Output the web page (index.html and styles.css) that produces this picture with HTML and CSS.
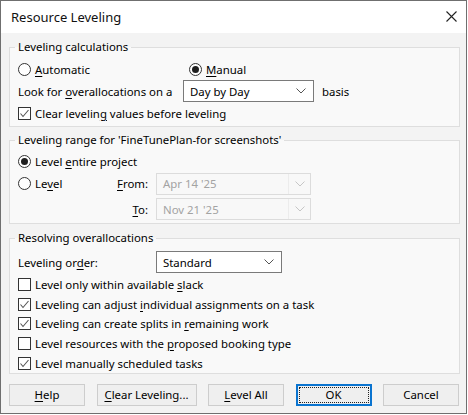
FILE: index.html
```html
<!DOCTYPE html>
<html>
<head>
<meta charset="utf-8">
<title>Resource Leveling</title>
<link rel="stylesheet" href="styles.css">
</head>
<body>
<div class="window">
  <div class="titlebar">
    <span class="title">Resource Leveling</span>
    <svg class="close" width="11" height="11" viewBox="0 0 11 11"><path d="M0.5 0.5L10.5 10.5M10.5 0.5L0.5 10.5" stroke="#222" stroke-width="1.1" fill="none"/></svg>
  </div>
  <div class="content">
    <fieldset class="group g1">
      <legend>Leveling calculations</legend>
      <div class="row">
        <label class="opt auto"><span class="radio"></span><span><u>A</u>utomatic</span></label>
        <label class="opt"><span class="radio on"></span><span><u>M</u>anual</span></label>
      </div>
      <div class="row">
        <span class="look-label">Look for <u>o</u>verallocations on a</span>
        <div class="combo basis-combo"><span>Day by Day</span><svg class="chev" width="10" height="6" viewBox="0 0 10 6"><polyline points="0.5,0.5 5,5 9.5,0.5" fill="none" stroke="#555" stroke-width="1"/></svg></div>
        <span class="basis">basis</span>
      </div>
      <div class="row">
        <label class="opt"><span class="check on"><svg width="11" height="11" viewBox="0 0 11 11"><polyline points="1.5,5.5 4,8.5 9.5,2" fill="none" stroke="#555" stroke-width="1.1"/></svg></span><span>Clear levelin<u>g</u> values before leveling</span></label>
      </div>
    </fieldset>

    <fieldset class="group g2">
      <legend>Leveling range for 'FineTunePlan-for screenshots'</legend>
      <div class="row">
        <label class="opt"><span class="radio on"></span><span>Level <u>e</u>ntire project</span></label>
      </div>
      <div class="range-grid">
        <label class="opt"><span class="radio"></span><span>Le<u>v</u>el</span></label>
        <span class="field-label"><u>F</u>rom:</span>
        <div class="combo date"><span>Apr 14 '25</span><span class="drop"><svg class="chev" width="10" height="6" viewBox="0 0 10 6"><polyline points="0.5,0.5 5,5 9.5,0.5" fill="none" stroke="#c6c6c6" stroke-width="1"/></svg></span></div>
        <span></span>
        <span class="field-label"><u>T</u>o:</span>
        <div class="combo date"><span>Nov 21 '25</span><span class="drop"><svg class="chev" width="10" height="6" viewBox="0 0 10 6"><polyline points="0.5,0.5 5,5 9.5,0.5" fill="none" stroke="#c6c6c6" stroke-width="1"/></svg></span></div>
      </div>
    </fieldset>

    <fieldset class="group g3">
      <legend>Resolving overallocations</legend>
      <div class="row order-row">
        <span class="order-label">Leveling or<u>d</u>er:</span>
        <div class="combo order-combo"><span>Standard</span><svg class="chev" width="10" height="6" viewBox="0 0 10 6"><polyline points="0.5,0.5 5,5 9.5,0.5" fill="none" stroke="#555" stroke-width="1"/></svg></div>
      </div>
      <div class="checks">
        <label class="opt crow"><span class="check"></span><span>Level only within available <u>s</u>lack</span></label>
        <label class="opt crow"><span class="check on"><svg width="11" height="11" viewBox="0 0 11 11"><polyline points="1.5,5.5 4,8.5 9.5,2" fill="none" stroke="#555" stroke-width="1.1"/></svg></span><span>Leveling can adjust <u>i</u>ndividual assignments on a task</span></label>
        <label class="opt crow"><span class="check on"><svg width="11" height="11" viewBox="0 0 11 11"><polyline points="1.5,5.5 4,8.5 9.5,2" fill="none" stroke="#555" stroke-width="1.1"/></svg></span><span>Leveling can create splits in <u>r</u>emaining work</span></label>
        <label class="opt crow"><span class="check"></span><span>Level resources with the <u>p</u>roposed booking type</span></label>
        <label class="opt crow"><span class="check on"><svg width="11" height="11" viewBox="0 0 11 11"><polyline points="1.5,5.5 4,8.5 9.5,2" fill="none" stroke="#555" stroke-width="1.1"/></svg></span><span>Level manually scheduled tasks</span></label>
      </div>
    </fieldset>

    <div class="buttons">
      <button class="btn"><u>H</u>elp</button>
      <button class="btn wide"><u>C</u>lear Leveling...</button>
      <button class="btn"><u>L</u>evel All</button>
      <button class="btn default"><span class="focus">OK</span></button>
      <button class="btn">Cancel</button>
    </div>
  </div>
</div>
</body>
</html>
```

FILE: styles.css
```css
* { box-sizing: border-box; }
html, body { margin: 0; padding: 0; background: #ffffff; }
body {
  font-family: "Noto Sans", "Liberation Sans", sans-serif;
  font-size: 11.4px;
  color: #000;
}
u { text-decoration-thickness: 1px; text-underline-offset: 2px; }

.window {
  width: 467px;
  height: 414px;
  border: 1px solid #6f6f6f;
  background: #f3f3f3;
  display: flex;
  flex-direction: column;
}
.titlebar {
  height: 32px;
  flex: none;
  background: #ffffff;
  display: flex;
  align-items: center;
  justify-content: space-between;
  padding: 0 9px 0 10px;
}
.title { font-size: 13px; color: #111; }
.close { margin-top: -1px; }

.content {
  flex: 1;
  padding: 6px 6px 0 8px;
  display: flex;
  flex-direction: column;
}

.group {
  margin: 0;
  padding: 3px 8px 2px 8px;
  border: 1px solid #dedede;
  background: #f9f9f9;
  min-width: 0;
}
.group legend {
  padding: 0 3px;
  margin-left: -3px;
  line-height: 16px;
  height: 16px;
}
.g2 { margin-top: 5px; padding-top: 2px; padding-bottom: 3px; }
.g3 { margin-top: 6px; padding-top: 5px; padding-bottom: 0; }

.row {
  height: 22px;
  display: flex;
  align-items: center;
}
.opt {
  display: flex;
  align-items: center;
  gap: 4px;
  white-space: nowrap;
}
.auto { width: 171px; }

.radio {
  width: 13px;
  height: 13px;
  border: 1px solid #333;
  border-radius: 50%;
  background: #fff;
  display: flex;
  align-items: center;
  justify-content: center;
  flex: none;
}
.radio.on::after {
  content: "";
  width: 7px;
  height: 7px;
  border-radius: 50%;
  background: #1f1f1f;
}
.check {
  width: 13px;
  height: 13px;
  border: 1px solid #333;
  background: #fff;
  display: flex;
  align-items: center;
  justify-content: center;
  flex: none;
}
.check svg { display: block; }

.look-label { width: 165px; white-space: nowrap; }
.combo {
  height: 22px;
  border: 1px solid #7a7a7a;
  background: #fff;
  display: flex;
  align-items: center;
  justify-content: space-between;
  padding: 0 7px 0 6px;
}
.chev { display: block; }
.basis-combo { width: 131px; }
.basis { margin-left: 8px; }

.range-grid {
  display: grid;
  grid-template-columns: 92px 46px 155px;
  grid-template-rows: 23px 22px;
  row-gap: 3px;
  align-items: center;
}
.field-label { text-align: right; padding-right: 8px; }
.combo.date {
  height: 22px;
  border-color: #dcdcdc;
  background: #f8f8f8;
  color: #a3a3a3;
  padding: 0 0 0 6px;
}
.range-grid .opt { align-self: start; height: 22px; }
.drop {
  width: 22px;
  height: 100%;
  border-left: 1px solid #ececec;
  display: flex;
  align-items: center;
  justify-content: center;
}

.order-label { width: 138px; white-space: nowrap; }
.order-combo { width: 126px; }
.checks { margin-top: 2px; display: flex; flex-direction: column; }
.crow { height: 19.6px; }

.buttons {
  margin-top: 10px;
  display: flex;
  justify-content: space-between;
  padding-right: 1px;
}
.btn {
  width: 76px;
  height: 22px;
  font: inherit;
  color: #000;
  background: #efefef;
  border: 1px solid #cdcdcd;
  padding: 0;
  display: flex;
  align-items: center;
  justify-content: center;
}
.btn.wide { width: 100px; }
.btn.default {
  border: 2px solid #0a74d0;
  padding: 1px;
}
.focus {
  width: 100%;
  height: 100%;
  border: 1px dotted #222;
  display: flex;
  align-items: center;
  justify-content: center;
}
```
